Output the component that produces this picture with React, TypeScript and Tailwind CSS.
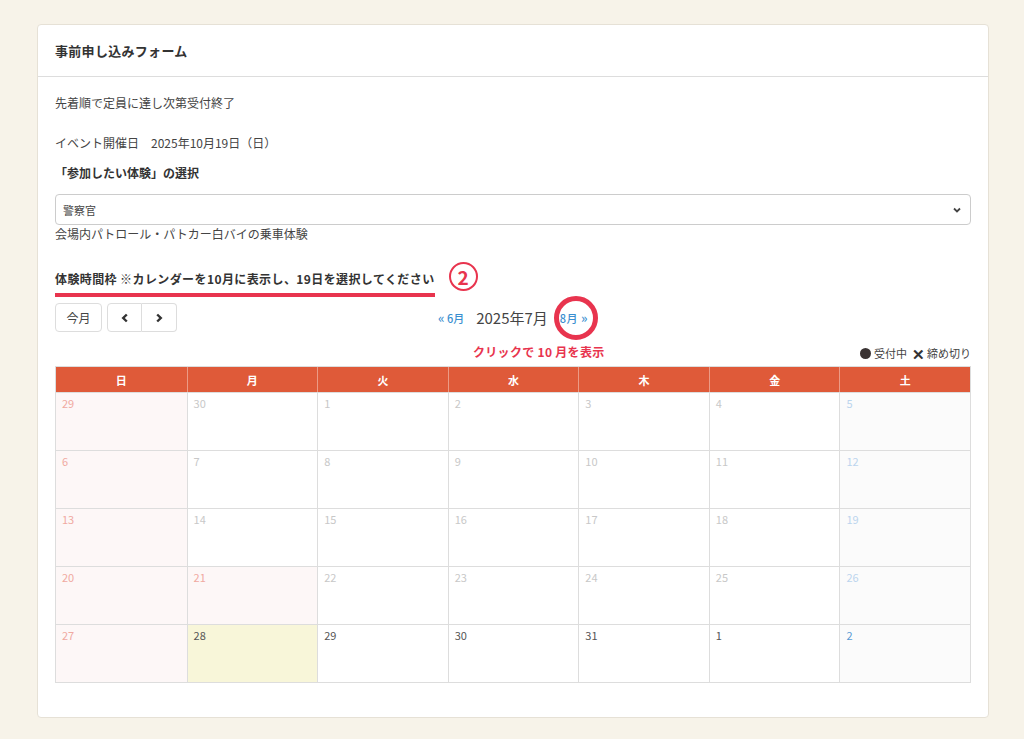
import React from 'react';

type Day = { d: number; past?: boolean; today?: boolean; holiday?: boolean };

const weeks: Day[][] = [
  [29, 30, 1, 2, 3, 4, 5].map((d) => ({ d, past: true })),
  [6, 7, 8, 9, 10, 11, 12].map((d) => ({ d, past: true })),
  [13, 14, 15, 16, 17, 18, 19].map((d) => ({ d, past: true })),
  [20, 21, 22, 23, 24, 25, 26].map((d) => ({ d, past: true, holiday: d === 21 })),
  [
    { d: 27, past: true },
    { d: 28, today: true },
    { d: 29 },
    { d: 30 },
    { d: 31 },
    { d: 1 },
    { d: 2 },
  ],
];

const dows = ['日', '月', '火', '水', '木', '金', '土'];

function cellClass(day: Day, col: number) {
  const sun = col === 0 || day.holiday;
  const sat = col === 6;
  let bg = 'bg-white';
  if (day.today) bg = 'bg-[#f8f6d9]';
  else if (sun) bg = 'bg-[#fdf7f7]';
  else if (sat) bg = 'bg-[#fbfbfb]';
  let text = 'text-[#555]';
  if (day.past) {
    if (sun) text = 'text-[#f0a9a1]';
    else if (sat) text = 'text-[#bcd5ee]';
    else text = 'text-[#c8c8c8]';
  } else if (sat) text = 'text-[#5b9bd5]';
  return `${bg} ${text}`;
}

export default function App() {
  return (
    <div
      className="min-h-[739px] bg-[#f7f3e9] pt-6 pb-[22px] pl-[37px] pr-[35px] text-[#444]"
      style={{ fontFamily: '"Noto Sans CJK JP", "Noto Sans", sans-serif' }}
    >
      <div className="bg-white border border-[#e6e1d6] rounded-[4px]">
        <div className="h-[52px] flex items-center px-[17px] border-b border-[#ddd]">
          <h1 className="text-[13px] font-bold text-[#333] tracking-[0.3px]">事前申し込みフォーム</h1>
        </div>

        <div className="px-[17px] pt-[17px] pb-[34px] text-[12px] leading-[18px]">
          <p className="text-[#444]">先着順で定員に達し次第受付終了</p>
          <p className="mt-[22px] text-[#444]">イベント開催日　2025年10月19日（日）</p>
          <p className="mt-[12px] font-bold text-[#333]">「参加したい体験」の選択</p>

          <div className="mt-[12px] h-[31px] border border-[#ccc] rounded-[4px] flex items-center justify-between pl-[7px] pr-[8px] text-[11px] text-[#444]">
            <span>警察官</span>
            <svg width="10" height="10" viewBox="0 0 10 10">
              <path d="M2 3.5 L5 6.5 L8 3.5" fill="none" stroke="#444" strokeWidth="1.8" />
            </svg>
          </div>
          <p className="text-[#444]">会場内パトロール・パトカー白バイの乗車体験</p>

          <div className="mt-[19px] flex items-end gap-[12px]">
            <span className="font-bold text-[#333] border-b-[4px] border-[#e8344e] pb-[5px] leading-[18px] tracking-[0.4px]">
              体験時間枠 ※カレンダーを10月に表示し、19日を選択してください
            </span>
            <span className="mb-[6px] ml-[2px] w-[29px] h-[29px] rounded-full border-[2px] border-[#e8344e] text-[#e8344e] font-bold text-[19px] flex items-center justify-center leading-none">
              2
            </span>
          </div>

          <div className="mt-[6px] h-[29px] grid grid-cols-[1fr_auto_1fr] items-center">
            <div className="flex gap-[5px]">
              <button className="h-[29px] w-[47px] border border-[#ddd] rounded-[4px] bg-white text-[12px] text-[#444]">
                今月
              </button>
              <div className="flex">
                <button className="h-[29px] w-[35px] border border-[#ddd] rounded-l-[4px] bg-white flex items-center justify-center">
                  <svg width="10" height="10" viewBox="0 0 10 10">
                    <path d="M6.8 1.5 L3.2 5 L6.8 8.5" fill="none" stroke="#333" strokeWidth="2.4" />
                  </svg>
                </button>
                <button className="h-[29px] w-[35px] border border-l-0 border-[#ddd] rounded-r-[4px] bg-white flex items-center justify-center">
                  <svg width="10" height="10" viewBox="0 0 10 10">
                    <path d="M3.2 1.5 L6.8 5 L3.2 8.5" fill="none" stroke="#333" strokeWidth="2.4" />
                  </svg>
                </button>
              </div>
            </div>
            <div className="flex items-center gap-[12px]">
              <span className="text-[11px] text-[#3a8fd0] font-medium">
                <span className="text-[13px]">«</span> 6月
              </span>
              <span className="text-[15px] text-[#444]">2025年7月</span>
              <span className="relative text-[11px] text-[#3a8fd0] font-medium tracking-[0.5px]">
                8月 <span className="text-[13px]">»</span>
                <span className="absolute left-[calc(50%+2px)] top-1/2 -translate-x-1/2 -translate-y-1/2 w-[44px] h-[44px] rounded-full border-[5px] border-[#e8344e]" />
              </span>
            </div>
            <div />
          </div>

          <div className="relative mt-[8px] h-[26px] flex items-end justify-end pb-[4px] text-[11px] text-[#444]">
            <span className="absolute left-[418px] top-[3px] text-[12px] font-bold text-[#e8344e] tracking-[0.3px]">
              クリックで 10 月を表示
            </span>
            <span className="flex items-center gap-[3px]">
              <span className="w-[11px] h-[11px] rounded-full bg-[#3a3333]" />
              受付中
            </span>
            <span className="ml-[5px] flex items-center gap-[2px]">
              <span className="font-bold text-[15px] leading-none text-[#333]">✕</span>
              締め切り
            </span>
          </div>

          <div className="border border-[#ddd]">
            <div className="grid grid-cols-7 bg-[#df5a39] h-[25px]">
              {dows.map((d, i) => (
                <div
                  key={d}
                  className={`flex items-center justify-center text-[11px] font-bold text-white ${
                    i > 0 ? 'border-l border-[#ec9a85]' : ''
                  }`}
                >
                  {d}
                </div>
              ))}
            </div>
            {weeks.map((w, wi) => (
              <div key={wi} className="grid grid-cols-7 h-[58px] border-t border-[#ddd]">
                {w.map((day, i) => (
                  <div
                    key={i}
                    className={`${cellClass(day, i)} text-[11px] leading-[16px] px-[6px] pt-[2px] ${
                      i > 0 ? 'border-l border-[#ddd]' : ''
                    }`}
                  >
                    {day.d}
                  </div>
                ))}
              </div>
            ))}
          </div>
        </div>
      </div>
    </div>
  );
}
